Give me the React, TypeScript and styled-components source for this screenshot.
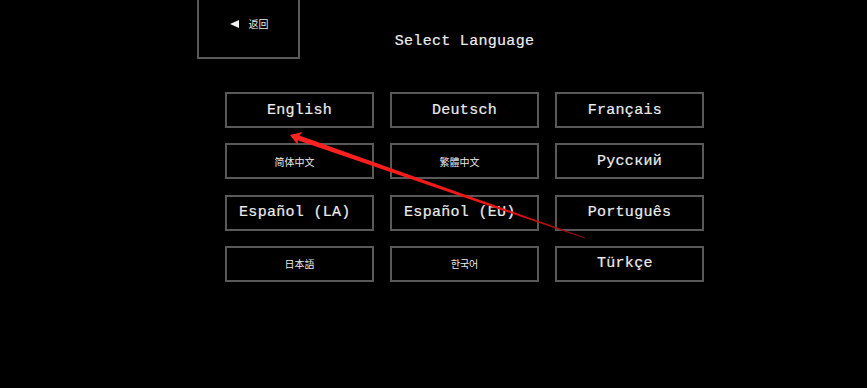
import React from "react";
import styled, { createGlobalStyle } from "styled-components";

const Global = createGlobalStyle`
  html, body {
    margin: 0;
    padding: 0;
    background: #000;
    overflow: hidden;
  }
  body {
    width: 867px;
    height: 388px;
    color: #ececec;
    font-family: "Liberation Mono", "DejaVu Sans Mono", monospace;
  }
`;

const Page = styled.div`
  position: relative;
  width: 867px;
  height: 388px;
  background: #000;
  padding-left: 197px;
  box-sizing: border-box;
`;

const Column = styled.div`
  width: 535px;
  display: flex;
  flex-direction: column;
`;

const Header = styled.div`
  display: grid;
  height: 59px;
  grid-template-areas: "stack";
`;

const BackButton = styled.button`
  grid-area: stack;
  justify-self: start;
  align-self: start;
  margin-top: -12px;
  width: 103px;
  height: 71px;
  box-sizing: border-box;
  border: 2px solid #595959;
  background: #000;
  color: #ececec;
  display: flex;
  align-items: center;
  justify-content: center;
  gap: 10px;
  padding: 0 0 0 1px;
  font-family: "Noto Sans CJK SC", sans-serif;
  font-size: 10px;
`;

const Triangle = styled.span`
  width: 0;
  height: 0;
  border-top: 4.5px solid transparent;
  border-bottom: 4.5px solid transparent;
  border-right: 9px solid #f0f0f0;
`;

const Title = styled.h1`
  grid-area: stack;
  justify-self: center;
  align-self: start;
  margin: 34px 0 0;
  font-family: "Liberation Mono", monospace;
  font-weight: normal;
  -webkit-text-stroke: 0.2px currentColor;
  font-size: 15px;
  line-height: 16px;
  letter-spacing: 0.3px;
  color: #ececec;
`;

const Grid = styled.div`
  margin-top: 33px;
  margin-left: 28px;
  display: grid;
  grid-template-columns: repeat(3, 149px);
  grid-auto-rows: 36px;
  column-gap: 16px;
  row-gap: 15.33px;
`;

const LangButton = styled.button<{ $cjk?: boolean }>`
  box-sizing: border-box;
  border: 2px solid #595959;
  background: #000;
  color: #ececec;
  padding: 0;
  display: flex;
  align-items: center;
  justify-content: center;
  font-family: ${(p) =>
    p.$cjk
      ? `"Noto Sans CJK SC", "Noto Sans CJK JP", "Noto Sans CJK KR", sans-serif`
      : `"Liberation Mono", monospace`};
  font-weight: normal;
  -webkit-text-stroke: ${(p) => (p.$cjk ? "0" : "0.2px currentColor")};
  font-size: ${(p) => (p.$cjk ? "10px" : "15px")};
  letter-spacing: ${(p) => (p.$cjk ? "0" : "0.3px")};
  white-space: pre;
`;

const Overlay = styled.svg`
  position: absolute;
  left: 0;
  top: 0;
  pointer-events: none;
`;

const languages: { label: string; cjk?: boolean }[] = [
  { label: "English" },
  { label: "Deutsch" },
  { label: "Français" },
  { label: "简体中文", cjk: true },
  { label: "繁體中文", cjk: true },
  { label: "Русский" },
  { label: "Español (LA)" },
  { label: "Español (EU)" },
  { label: "Português" },
  { label: "日本語", cjk: true },
  { label: "한국어", cjk: true },
  { label: "Türkçe" },
];

// Labels are laid out on a character grid: even-length labels sit half a cell left.
const padded = (label: string, cjk?: boolean) =>
  Array.from(label).length % 2 === 0 ? label + (cjk ? "\u3000" : " ") : label;

export default function App() {
  return (
    <>
      <Global />
      <Page>
        <Column>
          <Header>
            <BackButton>
              <Triangle />
              <span>返回</span>
            </BackButton>
            <Title>Select Language</Title>
          </Header>
          <Grid>
            {languages.map((l) => (
              <LangButton key={l.label} $cjk={l.cjk}>
                {padded(l.label, l.cjk)}
              </LangButton>
            ))}
          </Grid>
        </Column>
        <Overlay width="867" height="388" viewBox="0 0 867 388">
          <defs>
            <linearGradient
              id="arrowGrad"
              gradientUnits="userSpaceOnUse"
              x1="290"
              y1="135"
              x2="585"
              y2="238"
            >
              <stop offset="0" stopColor="#ff2424" />
              <stop offset="0.7" stopColor="#f01515" />
              <stop offset="1" stopColor="#8a0808" />
            </linearGradient>
          </defs>
          <polygon
            points="290,135 302.7,132.05 299.32,135.62 585.17,237.53 584.83,238.47 297.66,140.34 298.06,145.25"
            fill="url(#arrowGrad)"
          />
        </Overlay>
      </Page>
    </>
  );
}
